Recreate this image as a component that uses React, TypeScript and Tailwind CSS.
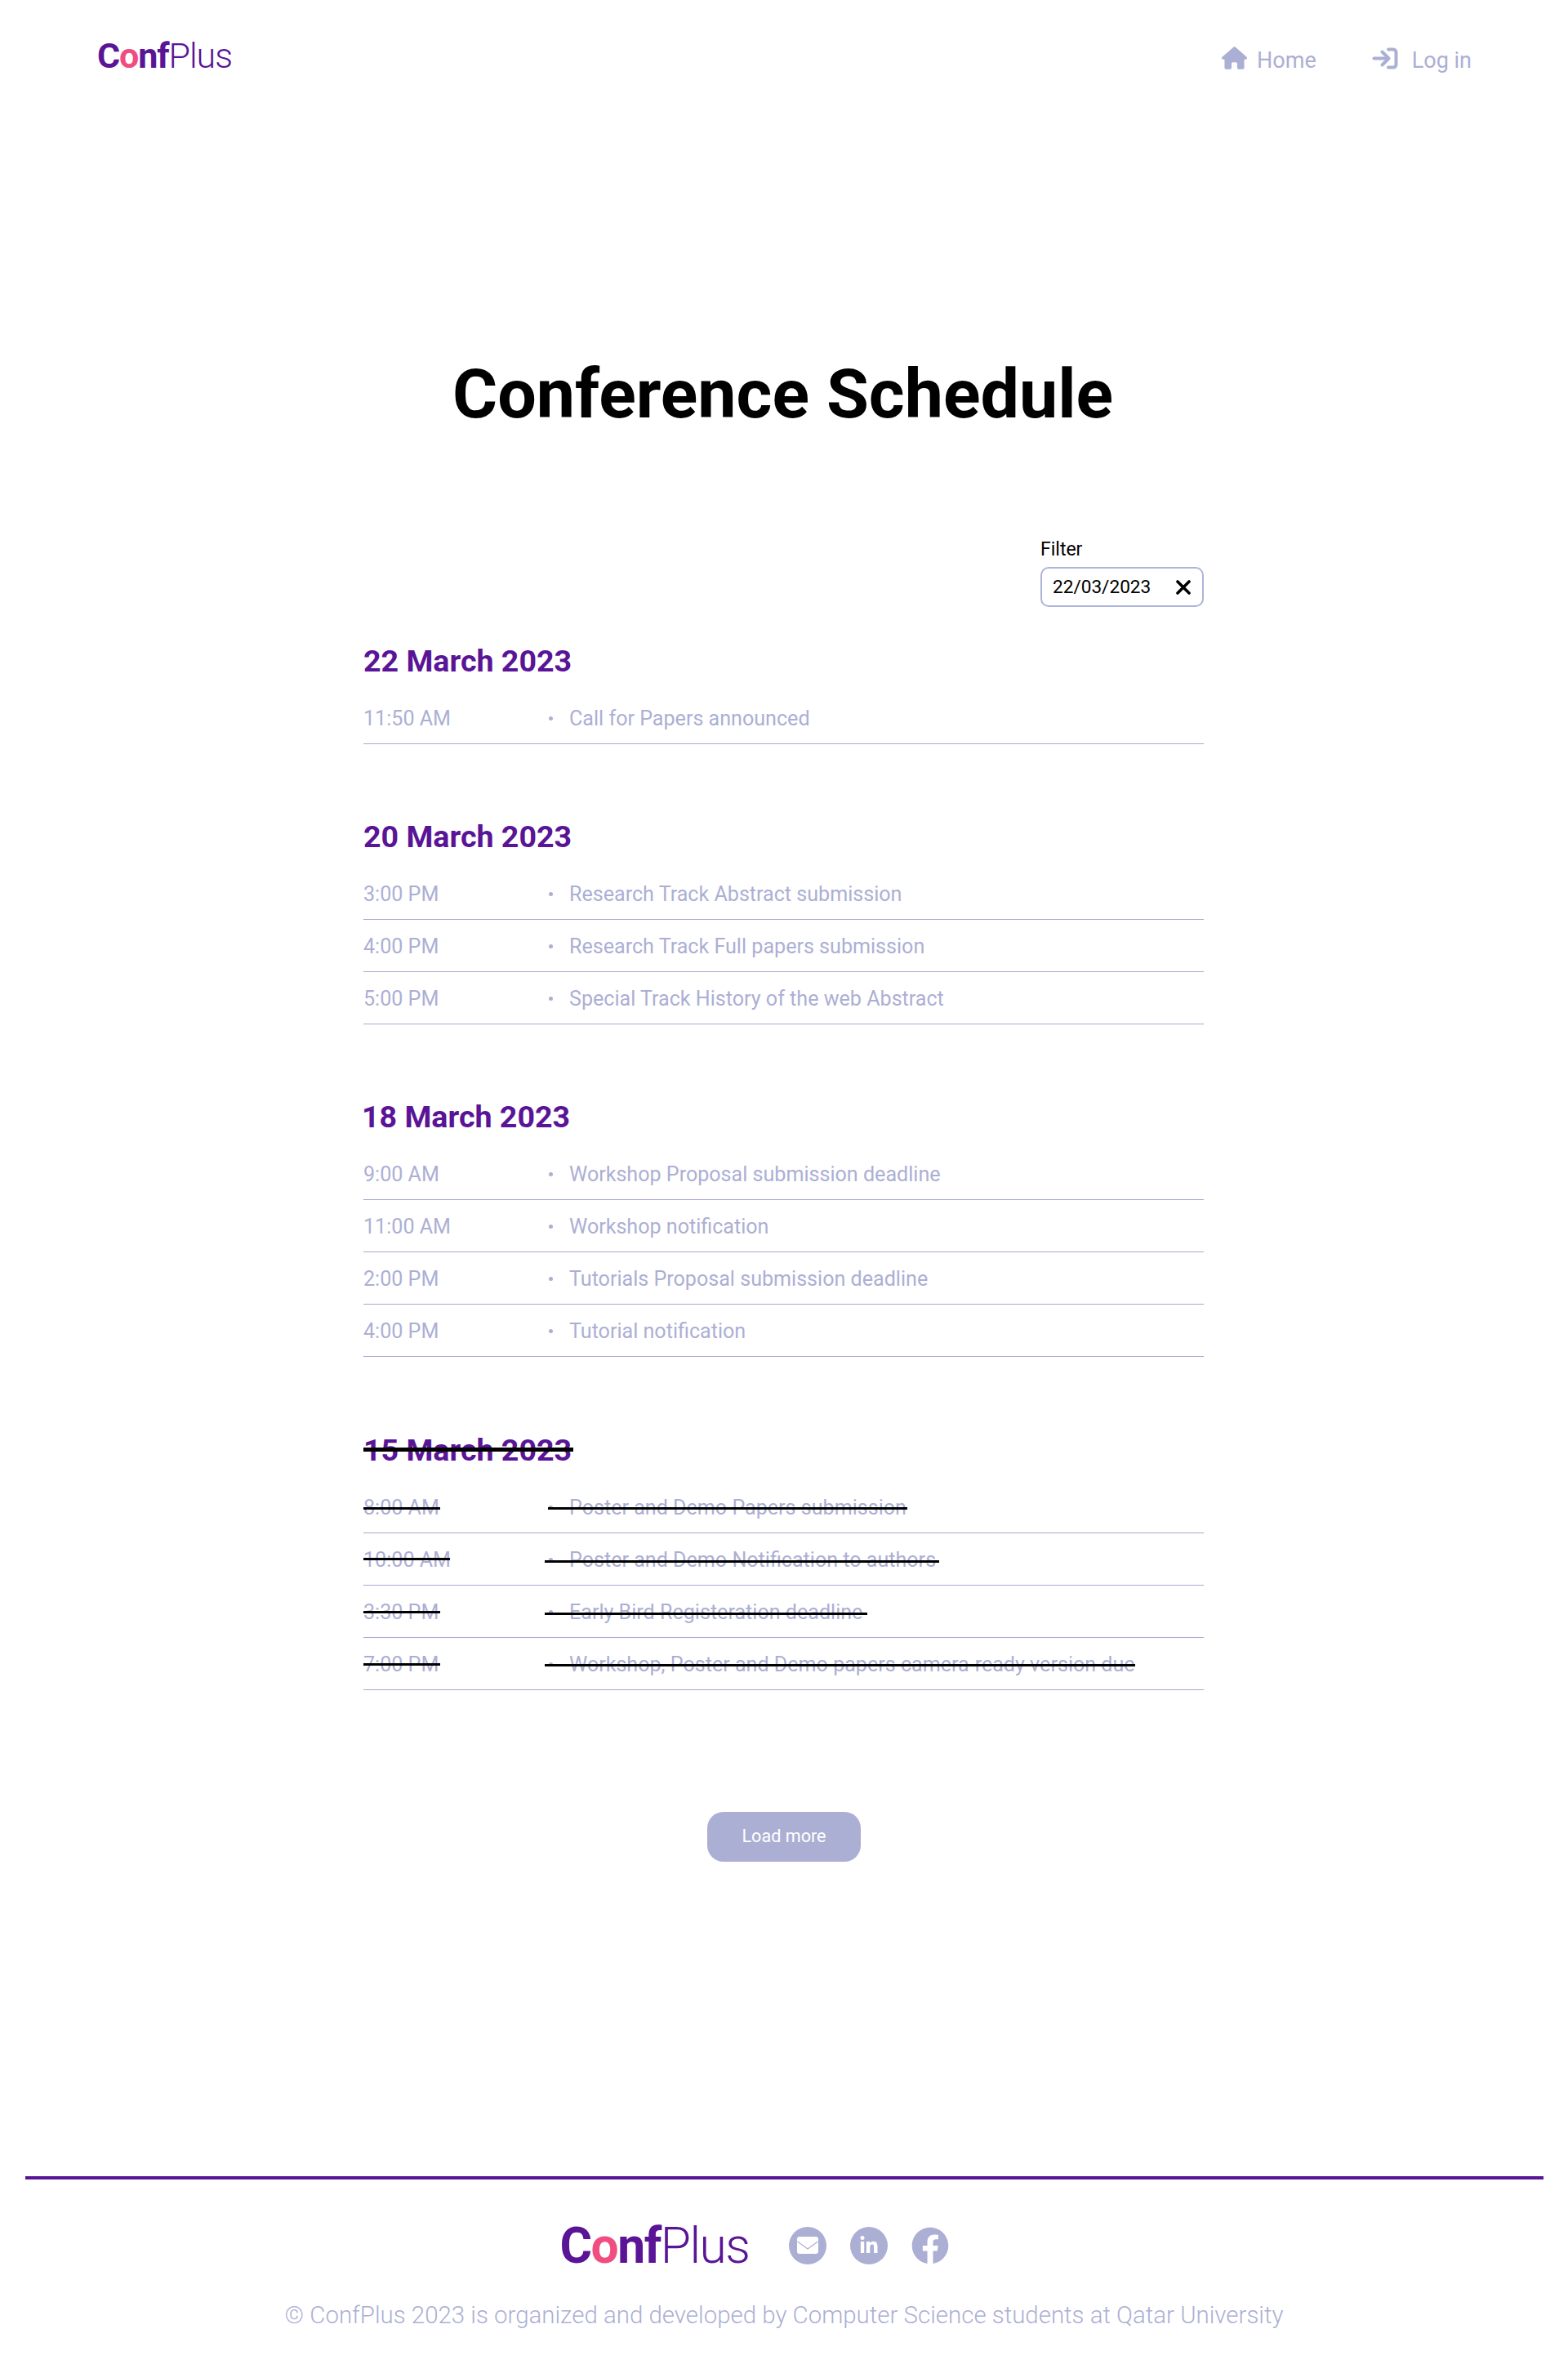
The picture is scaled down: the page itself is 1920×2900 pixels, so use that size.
import { FaHouse } from 'react-icons/fa6'
import { FaFacebook, FaLinkedinIn } from 'react-icons/fa'

type Item = {
  time: string
  text: string
  timeStrike?: string
  textStrike?: string
}

type Section = {
  date: string
  items: Item[]
  headStrike?: boolean
  headClass: string
}

const sections: Section[] = [
  {
    date: '22 March 2023',
    headClass: 'mt-[43px]',
    items: [{ time: '11:50 AM', text: 'Call for Papers announced' }],
  },
  {
    date: '20 March 2023',
    headClass: 'mt-[90px]',
    items: [
      { time: '3:00 PM', text: 'Research Track Abstract submission' },
      { time: '4:00 PM', text: 'Research Track Full papers submission' },
      { time: '5:00 PM', text: 'Special Track History of the web Abstract' },
    ],
  },
  {
    date: '18 March 2023',
    headClass: 'mt-[90px] -ml-[2px]',
    items: [
      { time: '9:00 AM', text: 'Workshop Proposal submission deadline' },
      { time: '11:00 AM', text: 'Workshop notification' },
      { time: '2:00 PM', text: 'Tutorials Proposal submission deadline' },
      { time: '4:00 PM', text: 'Tutorial notification' },
    ],
  },
  {
    date: '15 March 2023',
    headClass: 'mt-[91px]',
    headStrike: true,
    items: [
      {
        time: '8:00 AM',
        text: 'Poster and Demo Papers submission',
        timeStrike: 'left-0 top-[32px] w-[94px]',
        textStrike: 'left-[226px] top-[32px] w-[440px]',
      },
      {
        time: '10:00 AM',
        text: 'Poster and Demo Notification to authors',
        timeStrike: 'left-0 top-[30px] w-[106px]',
        textStrike: 'left-[222px] top-[33px] w-[483px]',
      },
      {
        time: '3:30 PM',
        text: 'Early Bird Registeration deadline',
        timeStrike: 'left-0 top-[31px] w-[94px]',
        textStrike: 'left-[222px] top-[33px] w-[395px]',
      },
      {
        time: '7:00 PM',
        text: 'Workshop, Poster and Demo papers camera-ready version due',
        timeStrike: 'left-0 top-[31px] w-[94px]',
        textStrike: 'left-[222px] top-[32px] w-[723px]',
      },
    ],
  },
]

function Logo({ size }: { size: string }) {
  return (
    <span className={`${size} leading-none text-[#5a1496] tracking-[-0.025em]`}>
      <span className="font-bold">C</span>
      <span className="font-bold text-[#f04e80]">o</span>
      <span className="font-bold">nf</span>
      <span className="font-light">Plus</span>
    </span>
  )
}

function LoginIcon() {
  return (
    <svg viewBox="0 0 32 27" className="h-[27px] w-[32px]" fill="none" stroke="#acafd4" strokeWidth="4" strokeLinecap="round" strokeLinejoin="round">
      <path d="M20 2.5h6a3.5 3.5 0 0 1 3.5 3.5v15a3.5 3.5 0 0 1-3.5 3.5h-6" />
      <path d="M2.5 13.5h17" />
      <path d="M12.5 5.5l8 8-8 8" />
    </svg>
  )
}

function Row({ item }: { item: Item }) {
  return (
    <div className="relative flex h-16 items-center border-b border-[#a6a9d6] pt-[2px] text-[25.1px] text-[#acafd4]">
      <span className="w-[227px]">{item.time}</span>
      <span className="h-[5px] w-[5px] rounded-full bg-[#acafd4]" />
      <span className="ml-5">{item.text}</span>
      {item.timeStrike && <span className={`absolute h-[3px] bg-black ${item.timeStrike}`} />}
      {item.textStrike && <span className={`absolute h-[3px] bg-black ${item.textStrike}`} />}
    </div>
  )
}

export default function App() {
  return (
    <div className="flex h-[2900px] w-[1920px] flex-col bg-white font-['Roboto',sans-serif]">
      {/* header */}
      <header className="flex h-[140px] items-start justify-between pl-[119px] pr-[118px] pt-[47px]">
        <Logo size="text-[43px]" />
        <nav className="flex items-center gap-[68px] pt-[7px] text-[27px] text-[#acafd4]">
          <a className="flex items-center gap-3">
            <FaHouse className="mb-[6px] h-[28px] w-[31px]" />
            <span>Home</span>
          </a>
          <a className="flex items-center gap-[17px]">
            <span className="mb-[6px]">
              <LoginIcon />
            </span>
            <span>Log in</span>
          </a>
        </nav>
      </header>

      <main className="flex flex-col items-center">
        <h1 className="mt-[291px] pr-[3px] text-[84.3px] font-bold leading-[104px] text-black">Conference Schedule</h1>

        <div className="mt-[125px] flex w-[1030px] flex-col pr-px">
          <div className="flex flex-col self-end">
            <label className="text-[23px] leading-[26px] text-black">Filter</label>
            <div className="mt-2 flex h-[49px] w-[200px] items-center justify-between rounded-[10px] border-2 border-[#acb5d8] pl-[13px] pr-[14px] text-[22.6px] text-black">
              <span>22/03/2023</span>
              <svg viewBox="0 0 18 18" className="h-[18px] w-[18px]" stroke="black" strokeWidth="3.6" strokeLinecap="round">
                <path d="M2 2l14 14M16 2L2 16" />
              </svg>
            </div>
          </div>

          {sections.map((s) => (
            <section key={s.date}>
              <div className={`relative ${s.headClass}`}>
                <h2 className="text-[37.6px] font-bold leading-[46px] text-[#5a1496]">{s.date}</h2>
                {s.headStrike && <span className="absolute left-0 top-[20px] h-[5px] w-[257px] bg-black" />}
              </div>
              <div className="mt-[15px]">
                {s.items.map((item) => (
                  <Row key={item.time + item.text} item={item} />
                ))}
              </div>
            </section>
          ))}

          <button className="mt-[149px] ml-px h-[61px] w-[188px] self-center rounded-[20px] bg-[#acafd4] text-[21.6px] text-white">
            Load more
          </button>
        </div>
      </main>

      {/* footer */}
      <footer className="mt-auto mb-[48px] flex flex-col items-center">
        <div className="h-1 w-[1859px] bg-[#5a1496]" />
        <div className="mt-[52px] flex items-center gap-[29px] pr-[72px]">
          <Logo size="text-[60.5px]" />
          <div className="flex items-center gap-[29px] pb-[2px] pl-[20px]">
            <span className="flex h-[46px] w-[46px] items-center justify-center rounded-full bg-[#acafd4]">
              <svg viewBox="0 0 26 22" className="h-[22px] w-[26px]">
                <rect width="26" height="21" rx="3" fill="white" />
                <path d="M0.5 6l12.5 9 12.5-9" fill="none" stroke="#acafd4" strokeWidth="1.2" />
              </svg>
            </span>
            <span className="flex h-[46px] w-[46px] items-center justify-center rounded-full bg-[#acafd4] text-white">
              <FaLinkedinIn className="h-[24px] w-[24px]" />
            </span>
            <FaFacebook className="h-[46px] w-[46px] text-[#acafd4]" />
          </div>
        </div>
        <p className="mt-9 text-[29.45px] font-light leading-9 text-[#acafd4]">
          © ConfPlus 2023 is organized and developed by Computer Science students at Qatar University
        </p>
      </footer>
    </div>
  )
}
